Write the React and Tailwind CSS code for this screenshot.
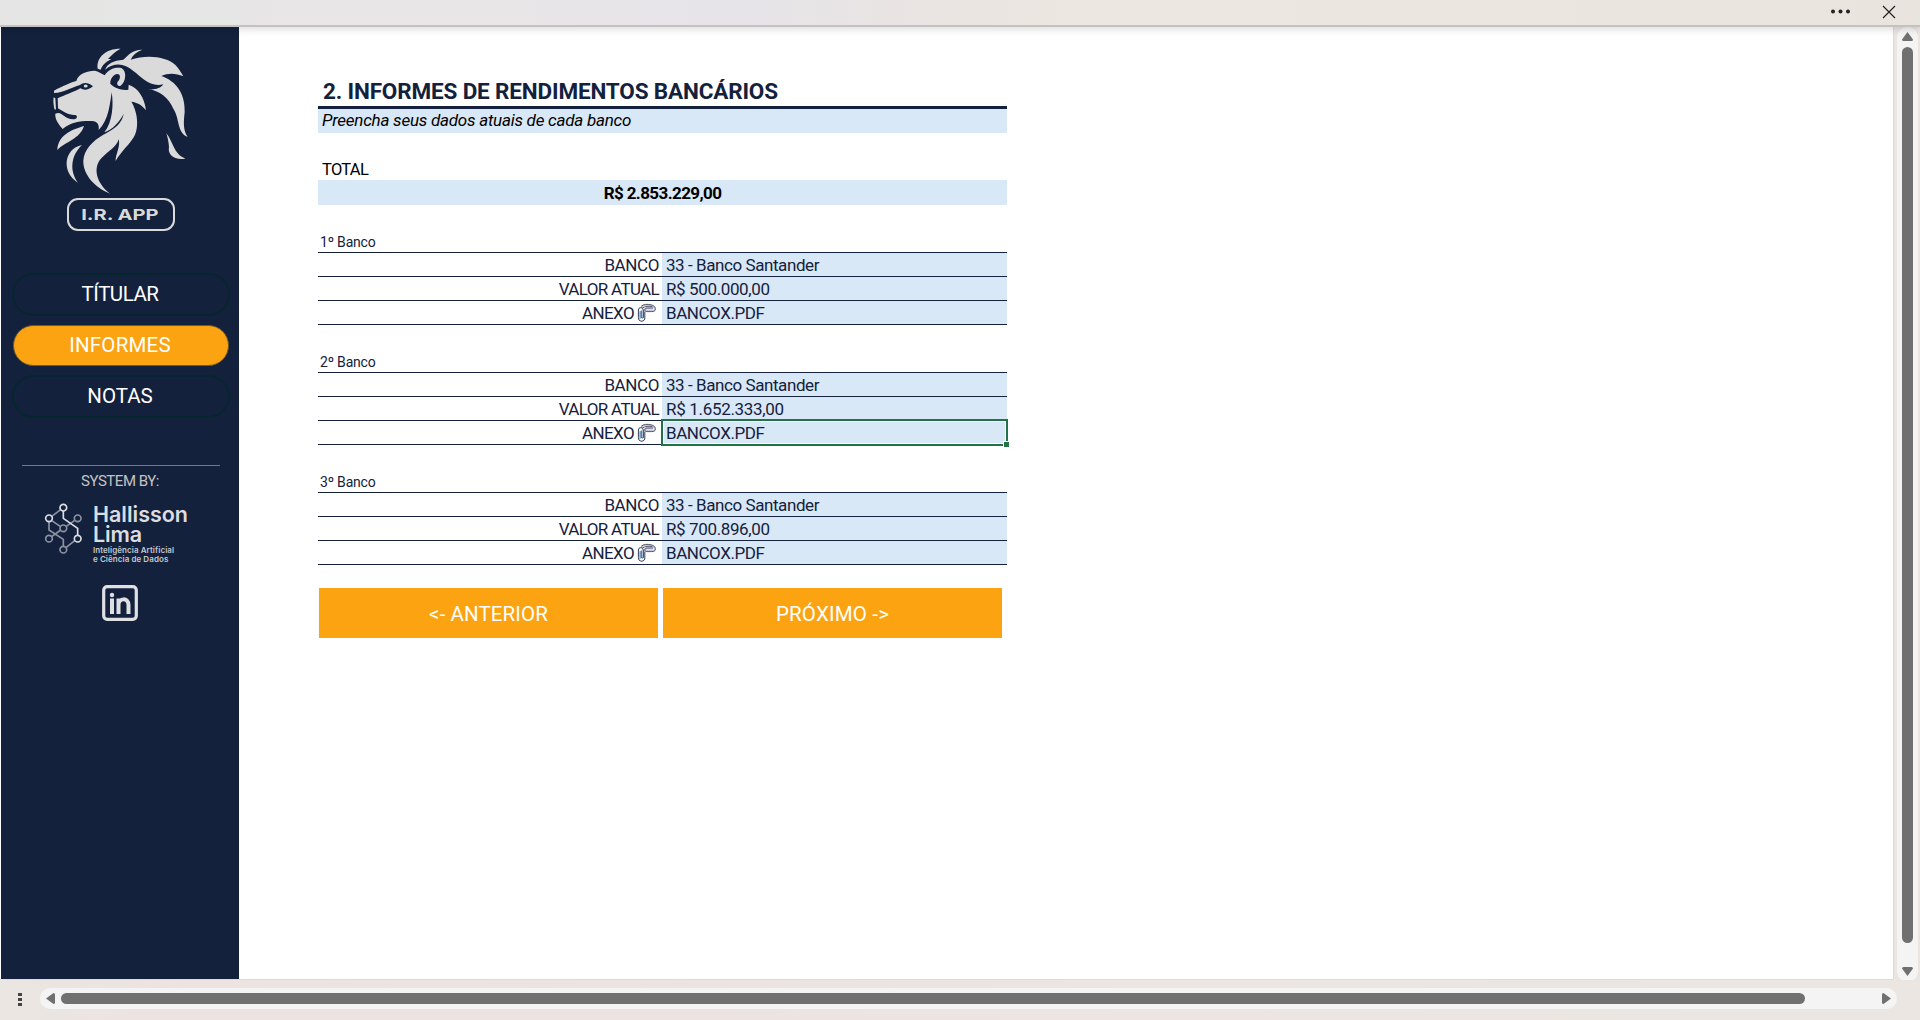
import React from "react";

function Lion() {
  return (
    <svg width="140" height="152" viewBox="150 140 420 456" fill="#dadada" className="block">
      <path d="M362 145C320 144 288 170 293 205L302 208C308 192 320 183 334 177L324 175C336 166 342 154 362 145Z" />
      <path d="M315 208C322 190 340 180 370 178C386 164 396 148 427 148C410 154 398 164 392 178C440 162 500 168 527 195C536 204 543 216 550 228C528 218 504 217 484 227C528 242 556 280 554 335C550 370 550 390 563 410C530 396 540 355 520 325C506 293 480 272 446 267C465 269 482 264 490 252C450 262 425 230 400 212C375 190 345 184 315 208Z" />
      <path d="M162 271C190 256 215 246 229 242C236 218 260 213 284 211C296 213 304 220 314 225C326 206 345 199 364 203C382 211 378 246 361 257C352 258 348 249 355 242C362 234 362 221 352 221C340 222 330 236 331 250C345 264 365 271 385 268L386 253C414 262 434 292 438 330C426 314 412 306 394 304C414 336 420 390 396 418C382 438 362 455 347 482C346 462 362 440 356 417C350 440 324 452 304 474C278 502 288 548 330 580C284 562 248 522 250 480C253 446 278 422 310 403C345 384 366 370 371 340C359 364 340 386 313 396C338 366 341 312 335 276C330 310 326 360 296 389C298 372 292 363 276 362C246 361 214 364 188 386C176 372 164 356 166 340C186 330 190 356 220 357C232 357 234 346 226 344C208 346 190 334 174 324L173 294C195 284 215 278 241 264C254 272 266 268 279 258C263 244 249 246 240 254C215 262 190 277 162 278Z" />
      <path d="M161 291L166 294L168 328L163 326C161 314 159 303 161 291Z" />
      <path d="M244 258C252 250 262 250 272 258C262 264 252 266 244 258Z" fill="#14213d" />
      <ellipse cx="257" cy="257" rx="6" ry="4.500" />
      <path d="M252 377C224 386 174 400 172 449C196 424 240 416 252 377Z" />
      <path d="M246 434C190 446 184 516 234 547C208 512 212 466 246 434Z" />
      <path d="M499 399C520 425 520 460 556 475C522 480 502 462 507 440C506 425 503 412 499 399Z" />
    </svg>
  );
}

function Network() {
  return (
    <svg width="40" height="54" viewBox="132 156 120 162" fill="none" strokeWidth="5" strokeLinejoin="round" className="block shrink-0">
      <g stroke="#8b92a1">
        <circle cx="190" cy="235" r="10" />
        <circle cx="233" cy="205" r="10" />
        <circle cx="147" cy="266" r="10" />
        <circle cx="190" cy="299" r="10" />
        <path d="M147 216V240L190 268V289M155 212L182 230M199 229L224 211M155 260L182 240M198 293L224 272" />
        <path d="M155 199L182 179" />
      </g>
      <g stroke="#dcdee2">
        <circle cx="190" cy="173" r="10" />
        <circle cx="147" cy="205" r="10" />
        <circle cx="233" cy="266" r="10" />
        <path d="M190 183V205L233 235V256" />
      </g>
    </svg>
  );
}

function Clip() {
  return (
    <svg width="20" height="20" viewBox="0 0 20 20" fill="none" strokeLinecap="round" className="block">
      <path d="M5 3.500C7 1.500 10 1.500 14 2.500C18.500 3.500 19.500 8 15 8H10C7.500 8 7.500 5.500 10 5.500H15" stroke="#c2c4d4" strokeWidth="2" />
      <path d="M3 8.500V15.500M6.500 7V14.500" stroke="#5aa0e0" strokeWidth="1.200" />
      <path d="M4.200 8V14.500a1.300 1.300 0 0 0 2 0V7a2.400 2.400 0 0 0-4.800 0V14.500a3.300 3.300 0 0 0 6.400 1.500V9" stroke="#33415a" />
      <path d="M4.500 3C7 1 10 1 14 1.800C19.500 3 20 8.600 15 8.600H10C7 8.600 7 5 10 5H15.500M5.500 5C8 3 12 3.200 15 3.600" stroke="#5c5f74" />
    </svg>
  );
}

function NavItem({ label, tracking, active }) {
  return (
    <div className={`flex h-[43px] w-[218px] items-center justify-center rounded-full p-px text-[20.5px] text-white ${active ? "" : "border-2 border-[#06262f]"} ${tracking}`}>
      <div className={`flex h-full w-full items-center justify-center rounded-full pr-[2px] ${active ? "border border-[#6b5a2c] bg-[#fca311]" : ""}`}>
        {label}
      </div>
    </div>
  );
}

function Row({ label, labelTracking, value, valueTracking, clip, selected }) {
  return (
    <div className="flex h-6 border-b border-[#14213d] text-[17px] leading-[25px] whitespace-nowrap text-[#14213d]">
      <div className="flex w-[344px] justify-end pr-[3px]">
        <span className={labelTracking}>{label}</span>
        {clip && <div className="mt-[2px] mr-[2px] ml-[3px]"><Clip /></div>}
      </div>
      <div className="relative flex-1 bg-[#d9e8f7] pl-[4px]">
        <span className={valueTracking}>{value}</span>
        {selected && (
          <div className="absolute -top-[2px] -right-[1px] -bottom-[2px] -left-[1px] border-2 border-[#217346]">
            <div className="h-full w-full border border-white" />
            <div className="absolute -right-[3px] -bottom-[3px] h-[6px] w-[6px] border-t border-l border-white bg-[#217346]" />
          </div>
        )}
      </div>
    </div>
  );
}

function Bank({ n, value, valueTracking, selected }) {
  return (
    <section className="mb-6">
      <h2 className="h-6 border-b border-[#14213d] pt-[3px] pl-[2px] text-sm leading-5 tracking-[-0.2px] text-[#14213d]">{`${n}º Banco`}</h2>
      <Row label="BANCO" labelTracking="tracking-[-0.4px]" value="33 - Banco Santander" valueTracking="tracking-[-0.43px]" />
      <Row label="VALOR ATUAL" labelTracking="tracking-[-0.66px]" value={value} valueTracking={valueTracking} />
      <Row label="ANEXO" labelTracking="tracking-[-0.6px]" value="BANCOX.PDF" valueTracking="tracking-[-0.44px]" clip selected={selected} />
    </section>
  );
}

function Sidebar() {
  return (
    <aside className="flex w-[238px] shrink-0 flex-col items-center bg-[#14213d] whitespace-nowrap">
      <div className="mt-5"><Lion /></div>
      <div className="-mt-px ml-px flex h-[33px] w-[108px] items-center justify-center rounded-[11px] border-2 border-[#dadada] pt-px pr-[2px]">
        <span className="scale-x-[1.34] font-['Inter'] text-[15px] font-bold text-[#dadada]">I.R. APP</span>
      </div>
      <nav className="mt-[42px] ml-[2px] flex flex-col items-center gap-2">
        <NavItem label="TÍTULAR" tracking="tracking-[-0.5px]" />
        <NavItem label="INFORMES" tracking="tracking-[0.2px]" active />
        <NavItem label="NOTAS" tracking="tracking-[0px]" />
      </nav>
      <div className="mt-[47px] ml-px h-px w-[198px] bg-[#76797f]" />
      <p className="mt-[6px] h-[18px] text-[15px] leading-[18px] tracking-[-0.46px] text-[#c4c3c2]">SYSTEM BY:</p>
      <div className="mt-3 ml-[43px] flex h-[62px] self-start">
        <Network />
        <div className="ml-[9px] pt-[2px] font-['Inter'] font-semibold text-[#dcdde0]">
          <p className="text-[21.5px] leading-5 tracking-[-0.02px]">Hallisson</p>
          <p className="text-[21.5px] leading-5 tracking-[-0.1px]">Lima</p>
          <p className="mt-[2px] text-[8px] leading-[9px] tracking-[0.07px] text-[#c5c8ce]">Inteligência Artificial</p>
          <p className="text-[8px] leading-[9px] tracking-[0.07px] text-[#c5c8ce]">e Ciência de Dados</p>
        </div>
      </div>
      <svg width="36" height="36" viewBox="0 0 36 36" fill="none" stroke="#dee0e3" className="mt-[21px] block">
        <rect x="1.700" y="1.700" width="32.600" height="32.600" rx="3.500" strokeWidth="3.200" />
        <path d="M10 13.500V29M16.500 13.500V29M16.500 20C16.500 13 26.500 12 26.500 20V29" strokeWidth="4" />
        <circle cx="10" cy="10" r="2.200" fill="#dee0e3" stroke="none" />
      </svg>
    </aside>
  );
}

function StepButton({ label, tracking }) {
  return (
    <button className={`h-[50px] w-[339px] bg-[#fca311] pt-[2px] text-[20.5px] leading-[48px] text-white ${tracking}`}>{label}</button>
  );
}

export default function App() {
  return (
    <div className="flex h-[1020px] w-[1920px] flex-col overflow-hidden bg-[#ebe5e1] font-['Roboto',sans-serif]">
      <header className="relative z-10 flex h-[27px] shrink-0 items-start justify-end border-b-2 border-[#c4c2c1] bg-[linear-gradient(to_right,#e4e5e4,#e9e6e7_22%,#e6e4e9_38%,#eae4e2_49%,#ece7e0_57%,#e9e4de)] pr-[24px] shadow-[0_2px_8px_rgba(0,0,0,0.15)]">
        <svg width="20" height="22" className="mr-[32px] block" fill="#222">
          <circle cx="3" cy="11.500" r="2" />
          <circle cx="10.500" cy="11.500" r="2" />
          <circle cx="18" cy="11.500" r="2" />
        </svg>
        <svg width="14" height="20" className="block" stroke="#222" strokeWidth="1.200"><path d="M1 6L13 18M13 6L1 18" /></svg>
      </header>
      <div className="flex h-[953px] shrink-0">
        <div className="flex w-[1894px] shrink-0 border-r border-b border-[#dddbd9] bg-white pl-px">
          <Sidebar />
          <main className="ml-[79px] w-[689px] pt-[49px]">
            <h1 className="h-[33px] border-b-3 border-[#14213d] pl-[5px] text-[22.5px] leading-[31px] font-bold tracking-[-0.16px] whitespace-nowrap text-[#14213d]">2. INFORMES DE RENDIMENTOS BANCÁRIOS</h1>
            <p className="h-6 bg-[#d9e8f7] pl-[4px] text-[17px] leading-[22px] tracking-[-0.24px] text-black italic">Preencha seus dados atuais de cada banco</p>
            <p className="mt-6 h-[23px] pl-[4px] text-[16.5px] leading-[25px] tracking-[-0.7px] text-black">TOTAL</p>
            <p className="mb-6 h-[25px] bg-[#d9e8f7] text-center text-[17px] leading-[26px] font-bold tracking-[-0.6px] text-black">R$ 2.853.229,00</p>
            <Bank n={1} value="R$ 500.000,00" valueTracking="tracking-[-0.38px]" />
            <Bank n={2} value="R$ 1.652.333,00" valueTracking="tracking-[-0.32px]" selected />
            <Bank n={3} value="R$ 700.896,00" valueTracking="tracking-[-0.38px]" />
            <div className="-mt-px ml-px flex gap-[5px]">
              <StepButton label="<- ANTERIOR" tracking="tracking-[0.1px]" />
              <StepButton label="PRÓXIMO ->" tracking="tracking-[0.17px]" />
            </div>
          </main>
        </div>
        <div className="ml-[3px] flex h-[955px] w-[21px] flex-col items-center rounded-full bg-[#f4f4f4]">
          <svg width="11" height="9" className="mt-[5px] block" fill="#707070"><path d="M5.500 0L11 7.500Q11 9 9.500 9H1.500Q0 9 0 7.500Z" /></svg>
          <div className="mt-[6px] h-[896px] w-[11px] rounded-full bg-[#707070]" />
          <svg width="11" height="9" className="mt-[24px] block" fill="#707070"><path d="M5.500 9L11 1.500Q11 0 9.500 0H1.500Q0 0 0 1.500Z" /></svg>
        </div>
      </div>
      <footer className="flex h-[40px] items-start bg-linear-to-r from-[#eae6e1] via-[#ede3e1] via-10% to-[#ebe6e1] pt-[8px]">
        <svg width="40" height="21" className="block" fill="#444">
          <rect x="18" y="5" width="4" height="3" />
          <rect x="18" y="10" width="4" height="3" />
          <rect x="18" y="15" width="4" height="3" />
        </svg>
        <div className="flex h-[21px] w-[1857px] items-center rounded-full bg-[#f4f4f4] pl-[6px]">
          <svg width="9" height="11" className="block" fill="#707070"><path d="M0 5.500L7.500 0Q9 0 9 1.500V9.500Q9 11 7.500 11Z" /></svg>
          <div className="ml-[6px] h-[11px] w-[1744px] rounded-full bg-[#707070]" />
          <svg width="9" height="11" className="ml-[77px] block" fill="#707070"><path d="M9 5.500L1.500 0Q0 0 0 1.500V9.500Q0 11 1.500 11Z" /></svg>
        </div>
      </footer>
    </div>
  );
}
